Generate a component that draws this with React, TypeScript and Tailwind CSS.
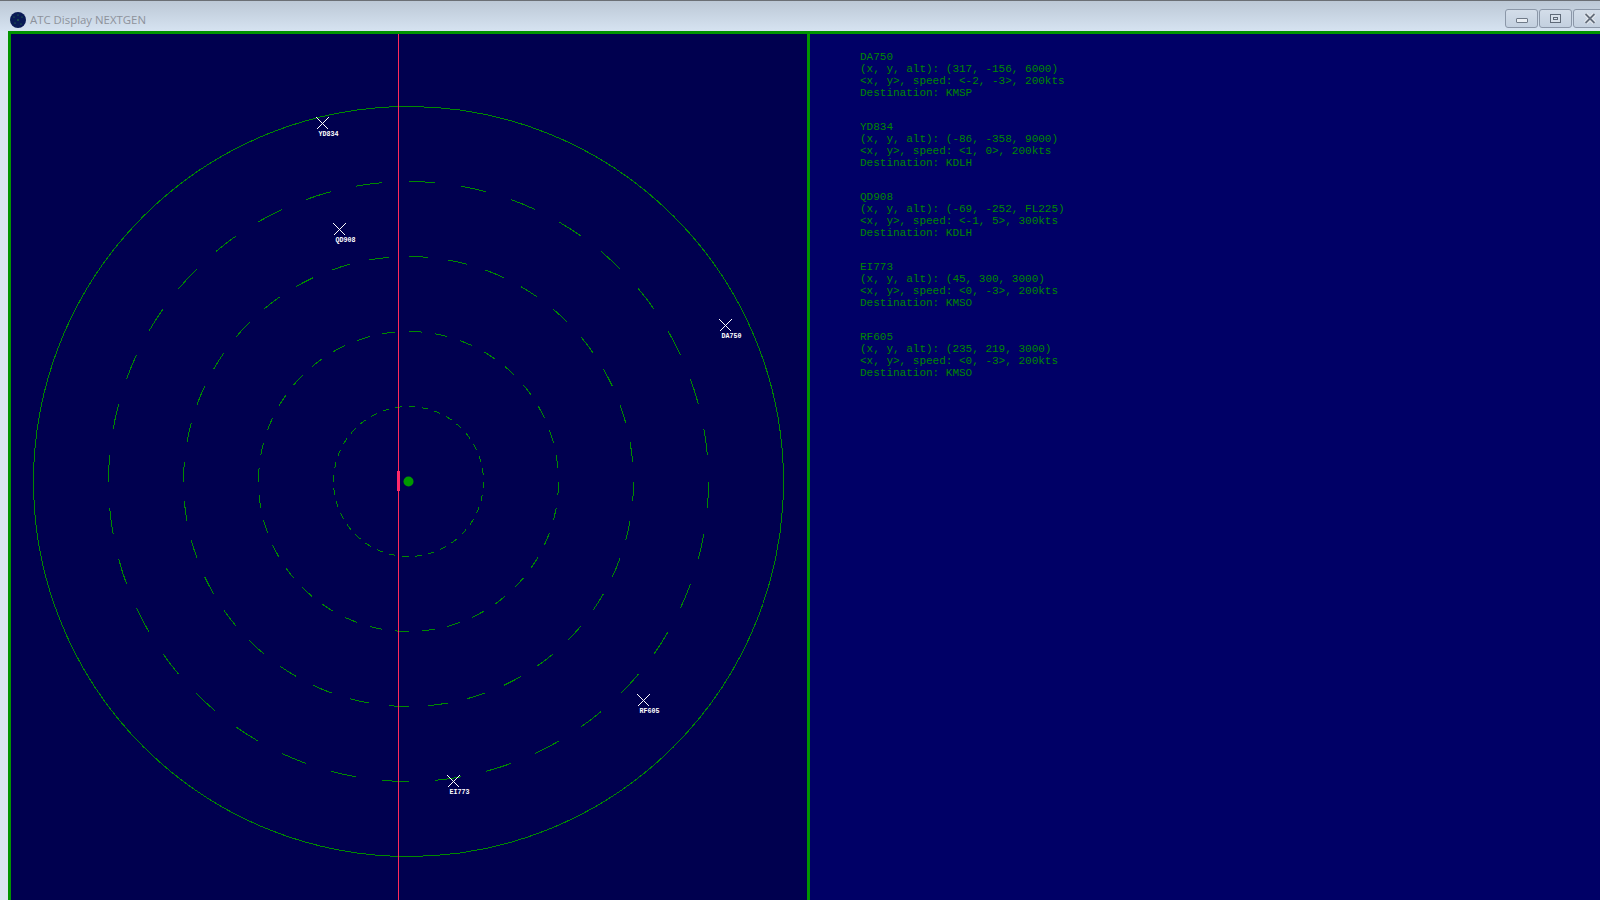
const CENTER_X = 397; // radar centre inside the left panel
const CENTER_Y = 447;

const flights = [
  { id: 'DA750', x: 317, y: -156, alt: '6000', vx: -2, vy: -3, speed: 200, dest: 'KMSP' },
  { id: 'YD834', x: -86, y: -358, alt: '9000', vx: 1, vy: 0, speed: 200, dest: 'KDLH' },
  { id: 'QD908', x: -69, y: -252, alt: 'FL225', vx: -1, vy: 5, speed: 300, dest: 'KDLH' },
  { id: 'EI773', x: 45, y: 300, alt: '3000', vx: 0, vy: -3, speed: 200, dest: 'KMSO' },
  { id: 'RF605', x: 235, y: 219, alt: '3000', vx: 0, vy: -3, speed: 200, dest: 'KMSO' },
];

function dashedRing(r: number) {
  const cx = CENTER_X + 0.5;
  const cy = CENTER_Y + 0.5;
  let d = '';
  for (let i = 0; i < 36; i++) {
    const a1 = (i * 10 * Math.PI) / 180;
    const a2 = ((i * 10 + 5) * Math.PI) / 180;
    const x1 = cx + r * Math.sin(a1);
    const y1 = cy - r * Math.cos(a1);
    const x2 = cx + r * Math.sin(a2);
    const y2 = cy - r * Math.cos(a2);
    d += `M${x1} ${y1}A${r} ${r} 0 0 1 ${x2} ${y2}`;
  }
  return d;
}

function Radar() {
  return (
    <svg width={796} height={866} viewBox="0 0 796 866" className="block">
      <g fill="none" stroke="#008a00" strokeWidth={1} shapeRendering="crispEdges">
        <circle cx={CENTER_X + 0.5} cy={CENTER_Y + 0.5} r={375} />
        {[75, 150, 225, 300].map((r) => (
          <path key={r} d={dashedRing(r)} />
        ))}
      </g>
      <circle cx={CENTER_X + 0.5} cy={CENTER_Y + 0.5} r={5} fill="#009900" />
      <rect x={387} y={0} width={1} height={866} fill="#ff2a5a" />
      <rect x={386} y={437} width={3} height={20} fill="#ff2a6a" />
      {flights.map((f) => {
        const px = CENTER_X + f.x + 0.5;
        const py = CENTER_Y + f.y + 0.5;
        return (
          <g key={f.id}>
            <path
              d={`M${px - 6} ${py - 6}L${px + 6} ${py + 6}M${px + 6} ${py - 6}L${px - 6} ${py + 6}`}
              stroke="#ffffff"
              strokeWidth={1}
              shapeRendering="crispEdges"
            />
            <text
              x={px - 4}
              y={py + 12}
              fill="#ffffff"
              fontSize={6.7}
              fontWeight={700}
              className="font-['Liberation_Mono',monospace]"
            >
              {f.id}
            </text>
          </g>
        );
      })}
    </svg>
  );
}

function TitleButton({ children, wide }: { children: React.ReactNode; wide?: boolean }) {
  return (
    <div
      className={`flex h-[19px] shrink-0 items-center justify-center rounded-[3px] border border-[#8b97a8] bg-gradient-to-b from-[#d3dde9] to-[#c3d0df] ${
        wide ? 'w-[34px]' : 'w-[33px]'
      }`}
    >
      {children}
    </div>
  );
}

export default function App() {
  return (
    <div className="flex h-[900px] w-[1600px] flex-col overflow-hidden bg-[#d9e5f2] font-['Liberation_Mono',monospace]">
      {/* title bar */}
      <div className="flex h-[31px] shrink-0 items-center border-t border-[#6b6f75] bg-gradient-to-b from-[#bcc8d6] to-[#d6e3f1] pl-[10px]">
        <svg width={16} height={16} viewBox="0 0 16 16" className="mt-[7px]">
          <circle cx={8} cy={8} r={8} fill="#0a1a55" />
          <circle cx={8} cy={8} r={0.8} fill="#2f8f3f" />
          <circle cx={4} cy={5} r={0.6} fill="#2f8f3f" />
          <circle cx={12} cy={5} r={0.6} fill="#2f8f3f" />
          <circle cx={5} cy={11} r={0.6} fill="#2f8f3f" />
          <circle cx={11} cy={12} r={0.6} fill="#2f8f3f" />
          <circle cx={8} cy={3} r={0.6} fill="#2f8f3f" />
        </svg>
        <span className="mt-[7px] ml-[4px] font-['Open_Sans',sans-serif] text-[11.4px] text-[#8d929b]">ATC Display NEXTGEN</span>
        <div className="mt-[5px] mr-[-7px] ml-auto flex gap-[1px] self-start pt-[3px]">
          <TitleButton>
            <div className="mt-[3px] h-[5px] w-[12px] rounded-[1px] border border-[#6f7a88] bg-[#e9eef4]" />
          </TitleButton>
          <TitleButton>
            <div className="flex h-[9px] w-[11px] items-center justify-center border border-[#5f6a78] bg-[#d7e0ea]">
              <div className="h-[3px] w-[5px] border border-[#5f6a78]" />
            </div>
          </TitleButton>
          <TitleButton wide>
            <svg width={12} height={11} viewBox="0 0 12 11">
              <path d="M1.5 1L10.5 10M10.5 1L1.5 10" stroke="#f2f5f8" strokeWidth={3.6} />
              <path d="M1.5 1L10.5 10M10.5 1L1.5 10" stroke="#66707e" strokeWidth={1.8} />
            </svg>
          </TitleButton>
        </div>
      </div>

      {/* client area */}
      <div className="ml-[8px] flex flex-1 border-t-[3px] border-l-[3px] border-[#009400]">
        <div className="w-[796px] shrink-0 bg-[#00004f]">
          <Radar />
        </div>
        <div className="flex-1 border-l-[3px] border-[#009400] bg-[#000066] pt-[17px] pl-[50px] text-[11px] leading-[12px] whitespace-pre text-[#008800]">
          {flights.map((f) => (
            <div key={f.id} className="mb-[22px]">
              <div>{f.id}</div>
              <div>{`(x, y, alt): (${f.x}, ${f.y}, ${f.alt})`}</div>
              <div>{`<x, y>, speed: <${f.vx}, ${f.vy}>, ${f.speed}kts`}</div>
              <div>{`Destination: ${f.dest}`}</div>
            </div>
          ))}
        </div>
      </div>
    </div>
  );
}
